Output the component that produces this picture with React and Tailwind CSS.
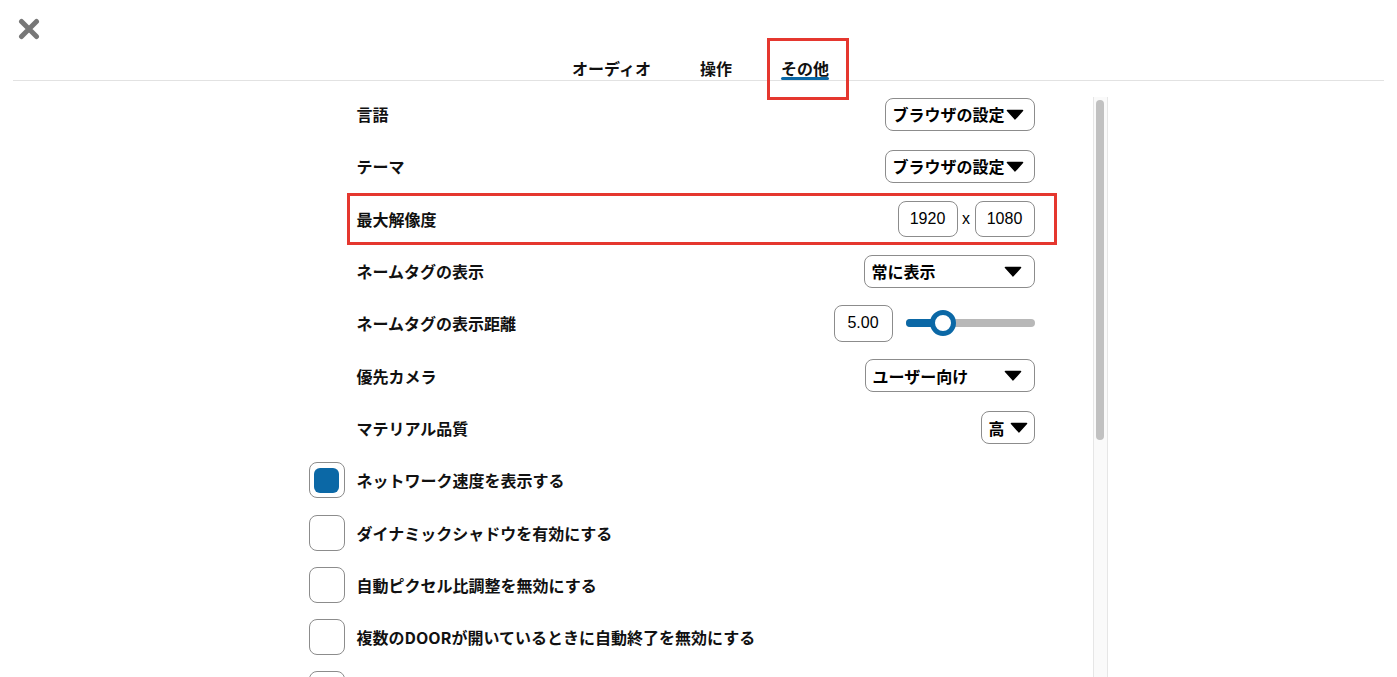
import React from "react";

const JP = { fontFamily: '"Noto Sans CJK JP", "Noto Sans", sans-serif' };
const LAT = { fontFamily: '"Liberation Sans", Arial, sans-serif' };

function Tri() {
  return (
    <svg width="18" height="11" viewBox="0 0 18 11" className="shrink-0">
      <path d="M1.5 1.5 H16.5 L9 9.8 Z" fill="#000" stroke="#000" strokeWidth="1.6" strokeLinejoin="round" />
    </svg>
  );
}

function Select({ text, w, pr = "pr-[10px]" }) {
  return (
    <div className={`${w} h-[33px] border border-[#8c8c8c] rounded-[8px] flex items-center justify-between pl-[7px] ${pr} text-[16px] font-bold text-black leading-none`}>
      <span>{text}</span>
      <Tri />
    </div>
  );
}

function NumBox({ v, w = "w-[60px]", h = "h-[36px]" }) {
  return (
    <div
      className={`${w} ${h} border border-[#8c8c8c] rounded-[8px] flex items-center justify-center text-[16px] text-black`}
      style={LAT}
    >
      {v}
    </div>
  );
}

function LabelRow({ label, children, highlight }) {
  return (
    <div className="relative shrink-0 h-[52.3px] flex items-center justify-between pl-[48px]">
      <span className="text-[16px] font-bold text-[#111]">{label}</span>
      <div className="flex items-center">{children}</div>
      {highlight && (
        <div className="absolute left-[38px] -right-[22px] top-0 bottom-0 border-[3px] border-[#e5372f] pointer-events-none" />
      )}
    </div>
  );
}

function CheckRow({ label, checked }) {
  return (
    <div className="shrink-0 h-[52.3px] flex items-center gap-[12px]">
      <div className="w-[36px] h-[36px] border border-[#8c8c8c] rounded-[8px] flex items-center justify-center shrink-0">
        {checked && <div className="w-[25px] h-[25px] rounded-[6px] bg-[#0b68a6]" />}
      </div>
      {label && <span className="text-[16px] font-bold text-[#111]">{label}</span>}
    </div>
  );
}

export default function App() {
  return (
    <div className="w-full h-[677px] overflow-hidden bg-white text-black" style={JP}>
      <div className="mx-[13px] h-[81px] border-b border-[#e2e2e2] flex flex-col">
        <div className="pt-[18px] pl-[5px]">
          <svg width="22" height="22" viewBox="0 0 22 22">
            <path d="M3.5 3.5 L18.5 18.5 M18.5 3.5 L3.5 18.5" stroke="#777" strokeWidth="5" strokeLinecap="round" />
          </svg>
        </div>
        <div className="mt-auto flex justify-center gap-[49px] -translate-x-[11px] pl-[26px]">
          {["オーディオ", "操作", "その他"].map((t, i) => (
            <div key={t} className="relative flex flex-col">
              <span className="text-[16px] font-bold leading-[20px] text-[#111]">{t}</span>
              <div className={`h-[3px] -mt-[1px] rounded-full ${i === 2 ? "bg-[#0b68a6]" : "bg-transparent"}`} />
              {i === 2 && (
                <div className="absolute -left-[14px] -right-[20px] -top-[20px] -bottom-[20px] border-[3px] border-[#e5372f] pointer-events-none" />
              )}
            </div>
          ))}
        </div>
      </div>

      <div className="flex justify-center h-[596px]">
        <div className="w-[818px] flex">
          <div className="w-[745px] pl-[19px] pt-[7px] flex flex-col">
            <LabelRow label="言語">
              <Select text="ブラウザの設定" w="w-[150px]" />
            </LabelRow>
            <LabelRow label="テーマ">
              <Select text="ブラウザの設定" w="w-[150px]" />
            </LabelRow>
            <LabelRow label="最大解像度" highlight>
              <NumBox v="1920" />
              <span className="w-[17px] text-center text-[16px]" style={LAT}>x</span>
              <NumBox v="1080" />
            </LabelRow>
            <LabelRow label="ネームタグの表示">
              <Select text="常に表示" w="w-[171px]" pr="pr-[12px]" />
            </LabelRow>
            <LabelRow label="ネームタグの表示距離">
              <NumBox v="5.00" w="w-[59px]" h="h-[37px]" />
              <div className="ml-[13px] w-[129px] h-[8px] rounded-full bg-[#b8b8b8] relative">
                <div className="w-[37px] h-[8px] rounded-full bg-[#0b68a6]" />
                <div className="absolute left-[24px] -top-[9px] w-[26px] h-[26px] rounded-full bg-white border-[5px] border-[#0b68a6]" />
              </div>
            </LabelRow>
            <LabelRow label="優先カメラ">
              <Select text="ユーザー向け" w="w-[170px]" pr="pr-[12px]" />
            </LabelRow>
            <LabelRow label="マテリアル品質">
              <Select text="高" w="w-[54px]" pr="pr-[6px]" />
            </LabelRow>
            <CheckRow label="ネットワーク速度を表示する" checked />
            <CheckRow label="ダイナミックシャドウを有効にする" />
            <CheckRow label="自動ピクセル比調整を無効にする" />
            <CheckRow label="複数のDOORが開いているときに自動終了を無効にする" />
            <CheckRow label="" />
          </div>
          <div className="ml-[58px] w-[15px] mt-[16px] bg-[#fafafa] border-x border-[#e6e6e6] flex flex-col">
            <div className="mt-[3px] mx-auto w-[8px] h-[340px] rounded-full bg-[#c1c1c1]" />
          </div>
        </div>
      </div>
    </div>
  );
}
